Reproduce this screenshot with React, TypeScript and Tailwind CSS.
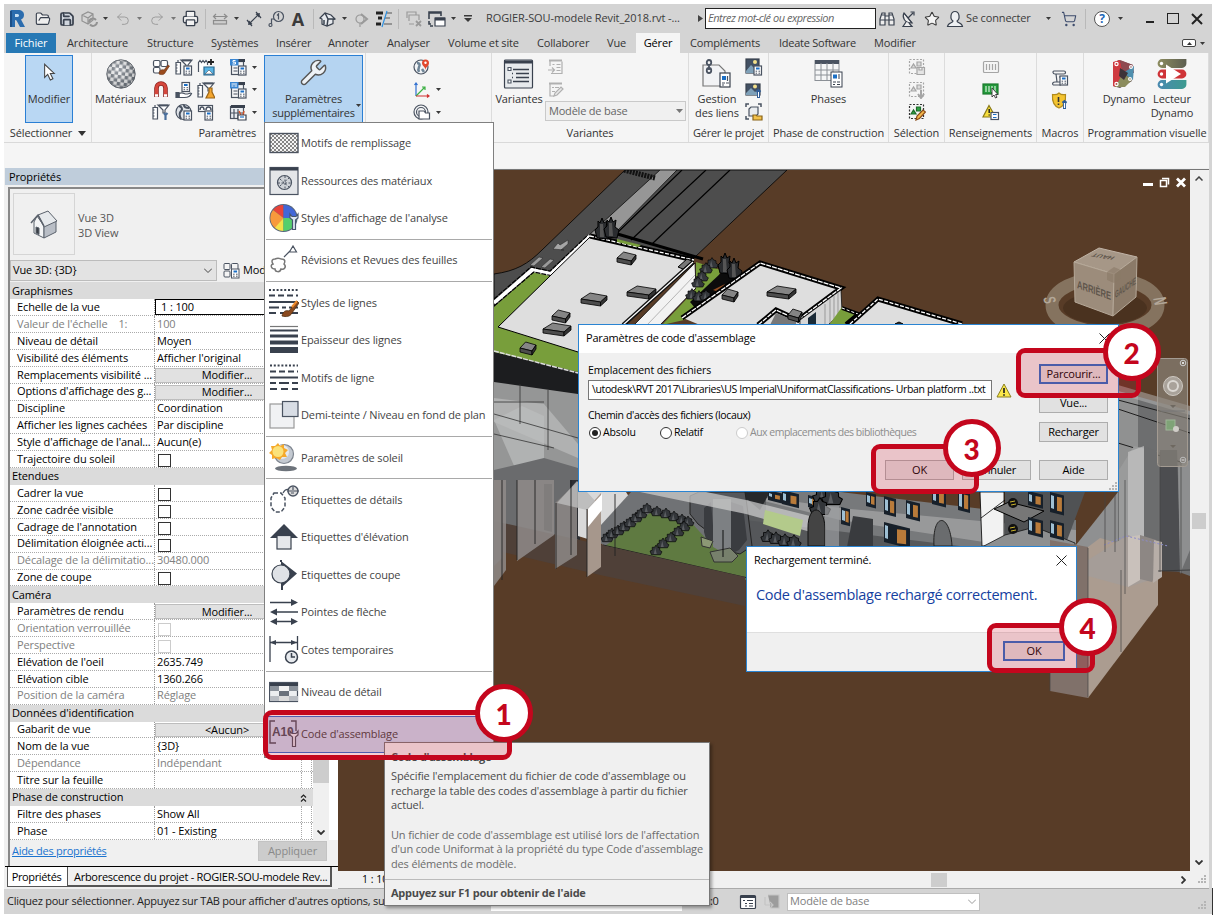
import React from "react";
import { Star, ShoppingCart, Undo2, Redo2, Printer, FolderOpen, Save, Wrench } from "lucide-react";

type Kids = { children?: React.ReactNode };

/* ---------- icons ---------- */
const D = "#4a5361";
const K = "#39414e";

function Svg({ s = 18, children, className = "" }: Kids & { s?: number; className?: string }) {
  return (
    <svg width={s} height={s} viewBox={`0 0 ${s} ${s}`} fill="none" stroke={D} strokeWidth="1.2" className={`shrink-0 ${className}`}>
      {children}
    </svg>
  );
}

const Caret = ({ dim = false }: { dim?: boolean }) => (
  <svg width="5" height="3" viewBox="0 0 5 3" className="shrink-0">
    <path d="M0 0h5L2.5 3z" fill={dim ? "#777" : "#3a3a3a"} />
  </svg>
);

const Calc = ({ x = 9, y = 8 }: { x?: number; y?: number }) => (
  <g>
    <rect x={x} y={y} width="7.5" height="9" fill="#fff" stroke={D} />
    <path d={`M${x + 2} ${y + 2.5}h3.6`} stroke="#1c6fc4" strokeWidth="2" />
    <path d={`M${x + 1.6} ${y + 5.2}h1.5m1.4 0h1.6m-4.5 2h1.5m1.4 0h1.6`} stroke={D} strokeWidth="1" />
  </g>
);
const Rule = () => (
  <g>
    <path d="M1 4.500h4.500v11.500H1z" fill="#fff" />
    <path d="M1 7h1.500m-1.500 3h1.500m-1.500 3h1.500M3 4.500V2" />
    <path d="M6 2h11l-4 5v3h-2V7z" fill="#fff" />
    <path d="M7 2.500h9" strokeWidth="1.800" />
  </g>
);
const Sheet = ({ t }: { t: string }) => (
  <g>
    <rect x="2.500" y="3.500" width="12" height="13" fill="#f4f5f7" />
    <path d="M9 2.500h7" strokeWidth="3" stroke={K} />
    <rect x="1" y="1" width="8.500" height="6.500" fill="#3a86d2" stroke="none" />
    <path d={t === "b" ? "M2.500 3h5.500M2.500 5h2m1 0h2.500" : "M6.500 2.500H4v1.700h2.500V6H3.500"} stroke="#fff" strokeWidth="1" />
    <path d="M4.500 10h4m-4 3h4" />
    <Calc x={9.500} y={8} />
  </g>
);

function Balls({ s = 30 }: { s?: number }) {
  return (
    <svg width={s} height={s} viewBox="0 0 30 30" className="shrink-0">
      <defs>
        <pattern id="chk" width="7" height="7" patternUnits="userSpaceOnUse" patternTransform="rotate(8)">
          <rect width="7" height="7" fill="#f4f5f6" />
          <path d="M0 0h3.5v3.5H0zM3.5 3.5H7V7H3.5z" fill="#6a727c" />
        </pattern>
        <radialGradient id="shade" cx=".4" cy=".35" r=".75">
          <stop offset="0" stopColor="#fff" stopOpacity=".3" />
          <stop offset="1" stopColor="#222" stopOpacity=".25" />
        </radialGradient>
      </defs>
      <circle cx="15" cy="15" r="14.2" fill="url(#chk)" stroke="#60666e" />
      <circle cx="15" cy="15" r="14.2" fill="url(#shade)" />
    </svg>
  );
}

function Small({ n }: { n: string }) {
  switch (n) {
    case "paint":
      return <Svg><rect x="1.500" y="2.500" width="6.500" height="6" rx="1.500" fill="#fff" /><rect x="9" y="2.500" width="6.500" height="6" rx="1.500" fill="#fff" /><rect x="1.500" y="9.500" width="6.500" height="5.500" rx="1.500" fill="#fff" /><path d="M7 16c0-4 3-5 5-4l4-5 1.500 1-4 6c-1 3-4 3-6.500 2z" fill="#9a4a1c" stroke="#6b3414" strokeWidth=".6" /></Svg>;
    case "magnet":
      return <Svg><path d="M4.500 16V7a4.500 4.500 0 0 1 9 0v9" stroke="#8d2420" strokeWidth="4.600" /><path d="M4.500 14V7a4.500 4.500 0 0 1 9 0v7" stroke="#d6473c" strokeWidth="3" /><path d="M3 14.500h3m6 0h3" stroke="#fff" strokeWidth="2.500" /></Svg>;
    case "rulewrench":
      return <Svg><Rule /><path d="M13.500 17V12l-1.500-2m1.500 2 2-2" stroke="#4a6f9c" strokeWidth="2.200" /></Svg>;
    case "rulecalc":
      return <Svg><Rule /><Calc /></Svg>;
    case "handcalc":
      return <Svg><Calc x={7} y={1.500} /><path d="M4 12.500c4-2 5 .5 7 .5 3 0 4-1.500 5.500-.5-1 2.500-4 4-7 4H4z" fill="#fff" /><path d="M1 11.500v5h3v-5z" fill={D} /></Svg>;
    case "globecalc":
      return <Svg><circle cx="8.500" cy="9" r="7.500" fill="#dfe3e8" /><path d="M4 3c3 1 4 3 2 5s-2 4 0 8M9 2c0 3 3 3 5 3" strokeWidth="2" /><Calc x={9} y={8} /></Svg>;
    case "rulehouse":
      return <Svg><path d="M1.500 14V4.500L3 2.500l1.500 2 1.500-2 1.500 2 1.500-2 1.500 2V7" fill="#fff" /><path d="M14 1v6M11 4h6" strokeWidth="1.800" stroke="#222" /><path d="M7 9h10v8H7z" fill="#59b4e4" stroke="#28688f" /><path d="m8 16 4-4 4 4z" fill="#fff" strokeWidth=".6" /></Svg>;
    case "ruleflask":
      return <Svg><Rule /><path d="M12 7h3v4l3 6H9l3-6z" fill="#f3a52e" stroke="#9a6416" /></Svg>;
    case "gaugecalc":
      return <Svg><rect x="1.500" y="2.500" width="14" height="6" fill="#fff" /><path d="M3 7c0-4 4-4 4 0M9 7c0-4 5-4 5 0" strokeWidth="1.500" /><Calc x={8} y={8} /></Svg>;
    case "sheetA":
      return <Svg><Sheet t="a" /></Svg>;
    case "sheetB":
      return <Svg><Sheet t="b" /></Svg>;
    case "sheetC":
      return <Svg><rect x="1.500" y="3.500" width="13" height="12" fill="#e9edf1" /><path d="M2 3.500h14" strokeWidth="3" stroke={K} /><path d="M5 6v9m4-9v9M2 10h12" /><path d="m10 8 2 4m3-4-1 4" stroke="#d0542c" strokeWidth="1.500" /><path d="M9 12h8v5H9z" fill="#fff" stroke={K} /><path d="M11 14h4" stroke="#1c6fc4" /></Svg>;
    case "globepin":
      return <Svg><circle cx="8" cy="9" r="7" fill="#f2f4f6" /><path d="M4 5c3 0 3 2 2 4s-1 3 0 5M9 11l2 3" strokeWidth="2.500" stroke="#6f8597" /><path d="M12.500 12c0-3-3.500-4-3.500-7a3.500 3.500 0 0 1 7 0c0 3-3.500 4-3.500 7z" fill="#e2482d" stroke="none" /><circle cx="12.500" cy="4.800" r="1.200" fill="#fff" stroke="none" /></Svg>;
    case "axes":
      return <Svg><path d="M3 15V2m-1.500 2L3 2l1.500 2" stroke="#2f6fd0" /><path d="m3 15 9-9m-3 0h3v3" stroke="#3cb043" /><path d="M3 15h13m-2-1.500 2 1.500-2 1.500" stroke="#d03030" /></Svg>;
    case "globehouse":
      return <Svg><circle cx="8" cy="9" r="7" fill="#f4f5f6" /><circle cx="8" cy="9" r="4.500" /><path d="M6 8h5l1.500 2h4v6H6z" fill="#fff" /></Svg>;
    case "listdim":
      return <Svg><g stroke="#b0b0b0"><path d="M2 2.500h13" strokeWidth="2" /><path d="M3 3v5m2.500-1.500h2m2 0h4m-4 3h4m-4 3h4M4 15.500h11v-12M1 12h6m-2-2.500L7.500 12 5 14.500" /></g></Svg>;
    case "editdim":
      return <Svg><g stroke="#b0b0b0"><path d="M2 2.500h13" strokeWidth="2" /><path d="M3 3v12h4M5 6.500h2m1 0h4M5 10.500h3" /><path d="m7 15 1-3 6-6 2 2-6 6z" fill="#e8e8e8" /></g></Svg>;
    case "piccalc":
      return <Svg><rect x="1" y="1" width="13" height="14" fill="#425063" stroke={K} /><path d="m1 13 5-6 4 4 4-3v7H1z" fill="#7ea0b8" stroke="none" /><circle cx="10" cy="4" r="2" fill="#f3e08a" stroke="none" /><Calc x={9} y={8} /></Svg>;
    case "picwrench":
      return <Svg><rect x="1" y="3" width="14" height="11" fill="#425063" stroke={K} /><path d="m1 12 5-5 4 4 4-3v6H1z" fill="#7ea0b8" stroke="none" /><circle cx="10" cy="5.500" r="2" fill="#f3e08a" stroke="none" /><path d="M13.500 17v-6L12 9m1.500 2L15 9" stroke="#2f5c96" strokeWidth="3" /><path d="M13.500 16v-5" stroke="#fff" strokeWidth="1" /></Svg>;
    case "box":
      return <Svg><path d="M1 4V1h3M13 1h3v3M1 13v3h3" strokeWidth="1.500" /><path d="m4 6 2-2h7v7l-2 2H4z" fill="#e9ecef" /><path d="M8 12h3l1 1h5v4H8z" fill="#f2c14a" stroke="#8a6418" /></Svg>;
    case "selsave":
    case "seldown":
      return <Svg><g stroke="#a5a5a5"><path d="M1.500 1.500h14v14h-14z" strokeDasharray="2 1.500" /><path d="m3 10 2.500-4L8 10zM9 4h4v4H9z" fill="#ddd" />{n === "selsave" ? <path d="M9 9.500h7.500v7H9zM11 9.500v2.500h3V9.500" fill="#e5e5e5" /> : <path d="M13 9v7m-3-3 3 4 3-4" strokeWidth="2" />}</g></Svg>;
    case "seledit":
      return <Svg><path d="M1.500 1.500h14v14h-14z" strokeDasharray="2 1.500" stroke="#333" /><path d="m3 11 2.500-4L8 11zM8.500 4h4v4h-4z" fill="#2fa043" stroke="#1d6b2b" /><path d="m8 17 1-4 6-6 2.500 2-6 6.500z" fill="#f2b64a" stroke="#8a4a18" /></Svg>;
    case "iddim":
      return <Svg><rect x="1.500" y="3.500" width="15" height="11" rx="1" stroke="#a5a5a5" /><path d="M4.500 6v6m3-6v6m3-6v6m3-6v6" stroke="#a5a5a5" /></Svg>;
    case "idsel":
      return <Svg><rect x="1" y="3" width="15" height="10" fill="#239a3b" stroke="#1b7a2e" /><path d="M4 5v6m3-6v6m3-6v6m3-6v6" stroke="#d6f2db" /><path d="M10 7v9l2-2 1.500 3 1.500-.8-1.400-2.700H16z" fill="#fff" stroke="#333" strokeWidth=".9" /></Svg>;
    case "warncalc":
      return <Svg><path d="M7 2.500 13.500 14H1z" fill="#f7de3c" stroke="#8a7a18" /><path d="M7.200 6v4m0 1.500v1" stroke="#222" strokeWidth="1.500" /><rect x="9" y="9.500" width="7.500" height="7" fill="#fff" /><path d="M11 11.500h3.500M11 14.500h3.500" stroke="#1c6fc4" /></Svg>;
    case "scrollcalc":
      return <Svg><path d="M3 2h10c2 0 2 3 0 3H4C1.500 5 1.500 2 3 2zM5 5l1 8M2 16c-1-1.500 0-3 2-3h5M2 16h8M8 8h3" fill="#f4f4f4" /><Calc x={9} y={7} /></Svg>;
    case "shieldwrench":
      return <Svg><path d="M8 1c2 2 4 2 6.500 1.500C15 9 13 14 8 16 3 14 1 9 1.500 2.500 4 3 6 3 8 1z" fill="#f4c430" stroke="#b08a1c" /><path d="M7.500 5v5m0 1.500V13" stroke="#333" strokeWidth="1.600" /><path d="M13.500 17v-6L12 9m1.500 2L15 9" stroke="#2f5c96" strokeWidth="3" /><path d="M13.500 16v-5" stroke="#fff" /></Svg>;
    case "cube":
      return <Svg><g stroke="#929292"><path d="m2 5 6-3 5 2v6l-5 4-6-3zM2 5l6 3 5-4M8 8v6" /><path d="M9 12a4 4 0 0 1 7-2m1 2a4 4 0 0 1-7 2.500" strokeWidth="2" /></g></Svg>;
    case "measure":
      return <Svg><path d="M3 6.500h13M5 4 2.500 6.500 5 9M13 4l3 2.500-3 2.500" stroke="#8c8c8c" /><rect x="2.500" y="10.500" width="13" height="3.500" stroke="#8c8c8c" fill="#ccc" /></Svg>;
    case "dim":
      return <Svg><path d="m4 14 10-10M2 10l5 6M11 2l5 6" stroke={K} /><path d="m3 15 1-4.500L7.500 14zM15 3l-4.500 1L14 7.500z" fill={K} stroke="none" /></Svg>;
    case "tag":
      return <Svg><circle cx="11.500" cy="6.500" r="5" /><path d="M10 5.500 11.500 4v5.500M7 9H4.500v5" /><circle cx="3.500" cy="15" r="1.500" /></Svg>;
    case "house":
      return <Svg><path d="m1 8 5-5 6 2 4 4-2 .5v4L8 16l-5-2V9z" fill="#e7eaee" stroke={K} /><path d="m6 3 3 6 7 0M9 9l-1 7M5 10v4" stroke={K} strokeWidth="1.500" /></Svg>;
    case "section":
      return <Svg><circle cx="8" cy="9" r="4" stroke="#9a9a9a" /><path d="m9 4 6 5-6 5" stroke="#9a9a9a" strokeWidth="2" /><path d="M8 13v4" stroke="#9a9a9a" /></Svg>;
    case "thin":
      return <Svg><path d="M1 3h7M3 8h4M1 14h5" strokeWidth="3" stroke="#222" /><path d="M11 3h6m-7 5h5m-6 6h8" stroke="#555" /><path d="M12 1 7 17" stroke="#2b8fe0" /></Svg>;
    case "closewin":
      return <Svg><g stroke="#9a9a9a"><path d="M2 8V2h9v3M4 11V5h10v5M9 14H4" /><path d="m11 11 5 5m0-5-5 5" strokeWidth="1.800" /></g></Svg>;
    case "switchwin":
      return <Svg><path d="M7 8h10v8H7z" fill="#fff" stroke={K} /><path d="M7 9h10" strokeWidth="3" stroke={K} /><path d="M1 9V2h12v4M1 3h12M3 14h-2v-3m4 5H2" stroke={K} strokeWidth="1.600" /></Svg>;
    case "bino":
      return <Svg><path d="M2 9 4 3h3v12H2zM11 3h3l2 6v6h-5zM7 6h4v4H7z" fill="#eee" stroke={K} /><path d="M2 10h5m4 0h5M4 5h3m4 0h3" stroke={K} /></Svg>;
    case "dish":
      return <Svg><path d="M4 3c-2 4 0 10 8 10z" fill="#eee" stroke={K} /><path d="m4 3 8 10M8 8l5-5m-2.500-1H14v3.500" stroke={K} /><path d="m6 12-3 4.500h9L9 13" stroke={K} fill="#eee" /></Svg>;
    case "user":
      return <Svg><path d="M9 1.500c5 0 5 8 2 9.500 0 2 5 1.500 5.500 5.500h-15C2 12.500 7 13 7 11 4 9.500 4 1.500 9 1.500z" fill="#eef0f2" stroke={K} /></Svg>;
    case "statuslist":
      return <Svg><rect x="1.500" y="2.500" width="15" height="13" rx="1" fill="#fff" stroke={K} /><path d="M1.500 4h15" stroke={K} strokeWidth="2" /><path d="M4 7.500h2m2 0h6M6 10.500h2m2 0h4M6 13h2m2 0h4" stroke={K} /></Svg>;
    case "statusoff":
      return <Svg><path d="M6 2h11v13H9M3 4v8m0 0h8M8 9l3 3-3 3" stroke="#c4c4c4" fill="#9c9c9c" /></Svg>;
    default:
      return null;
  }
}

const DocStack = () => (
  <svg width="32" height="32" viewBox="0 0 32 32" fill="none" stroke={D} strokeWidth="1.200">
    <path d="M2 7h16l6 6v15H2z" fill="#f2f3f5" stroke="#777" />
    <path d="M8 2c3 0 3 5 0 5s-3-5 0-5zm0 4v6m0-2c3 0 3 5 0 5s-3-5 0-5z" strokeWidth="1.800" />
    <rect x="19" y="15" width="10" height="14" fill="#fff" stroke={K} />
    <path d="M21 18h4v4h-4z" fill="#1c6fc4" stroke="none" />
    <path d="M26.500 18v5M21 25h3m1 0h3m-7 2h2" />
  </svg>
);
const VariantIcon = () => (
  <svg width="32" height="32" viewBox="0 0 32 32" fill="none" stroke={D}>
    <rect x="1.500" y="2" width="28" height="28" rx="1" fill="#e7eaed" stroke={K} strokeWidth="1.200" />
    <path d="M2 4h27" stroke={K} strokeWidth="3" />
    <path d="M5 9.500h3v3H5zM5 22h3v3H5z" strokeWidth="1.100" fill="#fff" />
    <path d="M10 11.500h16M9 15.500h1m3 0h13m-17 4h1m3 0h13m-16 4h16" stroke={K} strokeWidth="1.300" />
  </svg>
);
const PhaseIcon = () => (
  <svg width="32" height="32" viewBox="0 0 32 32" fill="none" stroke="#8b9096">
    <rect x="2" y="2.500" width="24" height="20" fill="#f5f6f7" />
    <path d="M2 4h24" stroke={D} strokeWidth="4" />
    <path d="M8 5v17m6-17v17m6-17v17M2 12h24M2 17h24" />
    <rect x="18" y="14" width="11" height="15" fill="#fff" stroke={K} />
    <path d="M20 16.500h4v4h-4z" fill="#1c6fc4" stroke="none" />
    <path d="M26 16v5M20 24h3m1 0h3m-7 2.500h2m2 0h3" stroke={K} />
  </svg>
);
const DynamoIcon = () => (
  <svg width="30" height="30" viewBox="0 0 30 30">
    <path d="M4 4 10 1l14 5-1 16-12 7-7-2z" fill="#5d4a52" />
    <path d="M4 3 11 1l3 13-7 14-3-1z" fill="#cf3a40" />
    <path d="m11 1 13 5 1 8-11 0z" fill="#8f4a50" />
    <path d="m25 7-1 14-10-7z" fill="#4f8fae" />
    <path d="m6 28 8-14 9 7-7 7z" fill="#8b8c5c" />
    <path d="m11 9 8 5-4 7-5-4z" fill="#3d3338" />
    <g fill="none" stroke="#fff" strokeWidth="1.200"><circle cx="7.500" cy="5" r="1.600" /><circle cx="22" cy="8" r="1.400" /><circle cx="7.500" cy="25" r="1.600" /><circle cx="21" cy="20" r="1.400" /></g>
  </svg>
);
const PlayerIcon = () => (
  <svg width="32" height="32" viewBox="0 0 32 32" strokeWidth="8.800" strokeLinecap="round">
    <defs>
      <linearGradient id="pa" gradientUnits="userSpaceOnUse" x1="2" x2="30" y1="0" y2="0"><stop stopColor="#8c8c60" /><stop offset="1" stopColor="#5e5f50" /></linearGradient>
      <linearGradient id="pb" gradientUnits="userSpaceOnUse" x1="2" x2="30" y1="0" y2="0"><stop stopColor="#4a8ab0" /><stop offset="1" stopColor="#3d9a90" /></linearGradient>
    </defs>
    <path d="M6 5.500h20v.01" stroke="url(#pa)" /><path d="M6 16h20" stroke="#cf3438" /><path d="M6 26.500h20v.01" stroke="url(#pb)" />
    <path d="m10 6.500 15 9.500-15 9.500z" fill="#fff" />
    <g fill="#fff"><circle cx="5.500" cy="5.500" r="1.700" /><circle cx="5.500" cy="16" r="1.700" /><circle cx="5.500" cy="26.500" r="1.700" /></g>
  </svg>
);

/* ---------- title bar ---------- */
function Slot({ c, children }: Kids & { c: string }) {
  return <div className={`flex h-full shrink-0 items-center justify-center ${c}`}>{children}</div>;
}
const VSep = () => <div className="h-5 w-px bg-[#b9b9b9]" />;

function TitleBar() {
  return (
    <div className="flex h-[29px] items-center bg-[#d4d4d4] text-[11px] text-[#3b3b3b]">
      <Slot c="w-[26px]"><svg width="16" height="17" viewBox="0 0 16 17"><path d="M2 0h7c4 0 6 2 6 5s-2 4-3 4.500L16 17h-5L7.500 10.500 6 10V17H1V1z" fill="#2b6cae" /><path d="M6 4h2.500c2 0 2 3 0 3H6z" fill="#c8dff2" /><path d="M1 1h2v16H1z" fill="#1d4f87" /></svg></Slot>
      <Slot c="w-[25px]"><FolderOpen size={16} strokeWidth={1.7} color={K} fill="#eee" /></Slot>
      <Slot c="w-[23px]"><Save size={16} strokeWidth={2.600} color={K} fill="#d0d6de" /></Slot>
      <Slot c="w-[22px]"><Small n="cube" /></Slot>
      <Slot c="w-[11px]"><Caret /></Slot>
      <Slot c="w-[23px]"><Undo2 size={16} strokeWidth={1.4} color="#999" /></Slot>
      <Slot c="w-[11px]"><Caret dim /></Slot>
      <Slot c="w-[23px]"><Redo2 size={16} strokeWidth={1.4} color="#999" /></Slot>
      <Slot c="w-[11px]"><Caret dim /></Slot>
      <Slot c="w-[22px]"><Printer size={17} strokeWidth={1.8} color={K} fill="#f2f2f2" /></Slot>
      <Slot c="w-[8px]"><VSep /></Slot>
      <Slot c="w-[21px]"><Small n="measure" /></Slot>
      <Slot c="w-[12px]"><Caret /></Slot>
      <Slot c="w-[23px]"><Small n="dim" /></Slot>
      <Slot c="w-[22px]"><Small n="tag" /></Slot>
      <Slot c="w-[22px]"><span className="text-[18px] leading-none font-bold">A</span></Slot>
      <Slot c="w-[8px]"><VSep /></Slot>
      <Slot c="w-[22px]"><Small n="house" /></Slot>
      <Slot c="w-[11px]"><Caret /></Slot>
      <Slot c="w-[22px]"><Small n="section" /></Slot>
      <Slot c="w-[23px]"><Small n="thin" /></Slot>
      <Slot c="w-[7px]"><VSep /></Slot>
      <Slot c="w-[23px]"><Small n="closewin" /></Slot>
      <Slot c="w-[24px]"><Small n="switchwin" /></Slot>
      <Slot c="w-[9px]"><Caret /></Slot>
      <Slot c="w-[20px]"><svg width="8" height="7" viewBox="0 0 8 7"><path d="M0 0h8v1.500H0zM0 3h8L4 7z" fill="#3a3a3a" /></svg></Slot>
      <div className="ml-[8px] w-[209px] shrink-0 pb-px text-[11px] tracking-[-0.1px]">ROGIER-SOU-modele Revit_2018.rvt -...</div>
      <Slot c="w-[10px]"><svg width="5" height="7" viewBox="0 0 5 7"><path d="M0 0v7l5-3.500z" fill="#444" /></svg></Slot>
      <div className="flex h-[21px] w-[171px] shrink-0 items-center border border-[#222] bg-white pl-[2px] text-[11px] tracking-[-0.48px] text-[#666] italic">Entrez mot-clé ou expression</div>
      <Slot c="w-[22px]"><Small n="bino" /></Slot>
      <Slot c="w-[22px]"><Small n="dish" /></Slot>
      <Slot c="w-[23px]"><Star size={16} strokeWidth={1.6} fill="#f4f4f4" /></Slot>
      <Slot c="w-[23px]"><Small n="user" /></Slot>
      <div className="w-[76px] shrink-0 tracking-[-0.15px]">Se connecter</div>
      <Slot c="w-[13px]"><Caret /></Slot>
      <Slot c="w-[28px]"><ShoppingCart size={16} strokeWidth={1.6} color="#3b4a6b" /></Slot>
      <Slot c="w-[4px]"><VSep /></Slot>
      <Slot c="w-[30px]"><span className="flex size-4 items-center justify-center rounded-full border border-[#555] bg-white text-[12px] leading-none font-bold text-[#1f68b8]">?</span></Slot>
      <Slot c="w-[6px]"><Caret /></Slot>
      <Slot c="w-[56px]"><span className="mt-[7px] mr-[3px] h-[2px] w-[8px] bg-[#222]" /></Slot>
      <Slot c="w-[1px]"><span className="mr-[14px] h-[11px] w-[12px] shrink-0 border-[1.5px] border-[#222]" /></Slot>
      <Slot c="w-[33px]"><svg width="12" height="12" viewBox="0 0 12 12"><path d="m1 1 10 10M11 1 1 11" stroke="#222" strokeWidth="2" /></svg></Slot>
    </div>
  );
}

function Tabs() {
  const tabs: [string, string][] = [
    ["Architecture", "w-[80px]"], ["Structure", "w-[64px]"], ["Systèmes", "w-[65px]"], ["Insérer", "w-[52px]"],
    ["Annoter", "w-[59px]"], ["Analyser", "w-[61px]"], ["Volume et site", "w-[89px]"], ["Collaborer", "w-[70px]"], ["Vue", "w-[29px]"],
  ];
  return (
    <div className="flex h-[20px] items-center bg-[#d4d4d4] text-[11px] tracking-[-0.15px] text-[#333]">
      <div className="ml-[2px] flex h-full w-[50px] shrink-0 items-center justify-center bg-[#2779b5] text-white">Fichier</div>
      <div className="w-[11px] shrink-0" />
      {tabs.map(([t, w]) => <span key={t} className={`${w} shrink-0 whitespace-nowrap`}>{t}</span>)}
      <div className="flex h-full w-[44px] shrink-0 items-center justify-center bg-[#f5f5f5] font-medium text-black">Gérer</div>
      <span className="ml-[10px] w-[89px] shrink-0">Compléments</span>
      <span className="w-[95px] shrink-0 tracking-[-0.25px]">Ideate Software</span>
      <span className="w-[308px] shrink-0">Modifier</span>
      <span className="flex h-[8px] w-[14px] items-center justify-center rounded-[2px] border border-[#444] bg-white"><svg width="5" height="3" viewBox="0 0 5 3"><path d="M0 3h5L2.500 0z" fill="#333" /></svg></span>
      <span className="ml-[4px]"><Caret /></span>
    </div>
  );
}

/* ---------- ribbon ---------- */
function Group({ w, label, children }: Kids & { w: string; label?: React.ReactNode }) {
  return (
    <div className={`flex h-[89px] shrink-0 flex-col border-r border-[#dcdcdc] ${w}`}>
      <div className="flex h-[71px] shrink-0">{children}</div>
      <div className="flex h-[18px] shrink-0 items-center justify-center text-[11px] tracking-[-0.13px] whitespace-nowrap">{label}</div>
    </div>
  );
}
function Big({ w, icon, children, c = "" }: Kids & { w: string; icon: React.ReactNode; c?: string }) {
  return (
    <div className={`flex shrink-0 flex-col items-center pt-[4px] text-center leading-[14px] ${w} ${c}`}>
      <div className="flex h-[34px] items-center">{icon}</div>
      <div className="pt-[0.500px] whitespace-nowrap">{children}</div>
    </div>
  );
}
function Col({ w, names, carets }: { w: string; names: string[]; carets?: boolean[] }) {
  return (
    <div className={`flex shrink-0 flex-col items-center pt-[3px] ${w}`}>
      {names.map((n, i) => (
        <div key={n} className="flex h-[22.6px] items-center gap-[5px]">
          <Small n={n} />
          {carets ? (carets[i] ? <Caret /> : <span className="w-[5px]" />) : null}
        </div>
      ))}
    </div>
  );
}

function Ribbon() {
  return (
    <div className="h-[115px] bg-[#f5f5f5] text-[11px] tracking-[-0.1px] text-[#333]">
      <div className="flex h-[90px] border-b border-[#d9d9d9] pl-px">
        <Group w="w-[87px]" label={<span className="flex items-center gap-[6px]">Sélectionner <svg width="8" height="5" viewBox="0 0 8 5"><path d="M0 0h8L4 5z" fill="#333" /></svg></span>}>
          <div className="mt-[2px] ml-[20px] flex h-[68px] w-[48px] shrink-0 flex-col items-center border border-[#2a7fd4] bg-[#b9d7f3] text-[11px]">
            <svg width="14" height="22" viewBox="0 0 16 24" className="mt-[6px]"><path d="M3 2v15l3.500-3.500L9.500 20l3-1.500-3-6H14z" fill="#fff" stroke="#444" strokeWidth="1.200" /></svg>
            <span className="mt-[7px]">Modifier</span>
          </div>
        </Group>
        <div className="flex h-[89px] w-[400px] shrink-0 border-r border-[#dcdcdc]">
          <div className="w-[172px] shrink-0">
            <div className="flex h-[71px]">
              <Big w="w-[57px]" icon={<Balls />}>Matériaux</Big>
              <Col w="w-[23px]" names={["paint", "magnet", "rulewrench"]} />
              <Col w="w-[23px]" names={["rulecalc", "handcalc", "globecalc"]} />
              <Col w="w-[22px]" names={["rulehouse", "ruleflask", "gaugecalc"]} />
              <div className="mt-[4px] ml-[5px] h-[64px] w-px bg-[#dcdcdc]" />
              <Col w="w-[42px]" names={["sheetA", "sheetB", "sheetC"]} carets={[true, true, true]} />
            </div>
            <div className="flex h-[18px] items-center justify-end pr-[8px] tracking-[-0.2px]">Paramètres</div>
          </div>
          <div className="mt-[2px] flex h-[68px] w-[99px] shrink-0 flex-col items-center border border-[#2a7fd4] bg-[#b5d4f1] leading-[14px]">
            <Wrench size={29} strokeWidth={1.200} color="#555" fill="#eef2f6" className="mt-[2px] shrink-0" />
            <span className="mt-[5px] tracking-[-0.25px]">Paramètres</span>
            <span className="relative tracking-[-0.25px]">supplémentaires<span className="absolute top-[-2px] -right-[6px] flex"><Caret /></span></span>
          </div>
          <div className="w-[3px] border-r border-[#dcdcdc]" />
          <div className="pl-[2px]"><Col w="w-[117px]" names={["globepin", "axes", "globehouse"]} carets={[false, true, true]} /></div>
        </div>
        <Group w="w-[197px]" label="Variantes">
          <Big w="w-[54px]" icon={<VariantIcon />}>Variantes</Big>
          <div className="flex flex-col pt-[3px]">
            <div className="flex h-[22.500px] items-center pl-[1px]"><Small n="listdim" /></div>
            <div className="flex h-[22.500px] items-center pl-[1px]"><Small n="editdim" /></div>
            <div className="-ml-px flex h-[20px] w-[141px] items-center justify-between border border-[#c9c9c9] bg-[#f0f0f0] pr-[2px] pl-[3px] tracking-[-0.2px] text-[#666]">Modèle de base<svg width="7" height="4" viewBox="0 0 7 4"><path d="M0 0h7L3.500 4z" fill="#777" /></svg></div>
          </div>
        </Group>
        <Group w="w-[80px]" label={<span className="tracking-[-0.25px]">Gérer le projet</span>}>
          <Big w="w-[56px]" icon={<DocStack />}>Gestion<br />des liens</Big>
          <Col w="w-[17px]" names={["piccalc", "picwrench", "box"]} />
        </Group>
        <Group w="w-[120px]" label="Phase de construction"><Big w="w-[119px]" icon={<PhaseIcon />}>Phases</Big></Group>
        <Group w="w-[56px]" label="Sélection"><Col w="w-[55px]" names={["selsave", "seldown", "seledit"]} /></Group>
        <Group w="w-[92px]" label="Renseignements"><Col w="w-[91px]" names={["iddim", "idsel", "warncalc"]} /></Group>
        <Group w="w-[47px]" label="Macros"><div className="pt-[11px]"><Col w="w-[46px]" names={["scrollcalc", "shieldwrench"]} /></div></Group>
        <Group w="w-[125px]" label={<span className="ml-[2px]">Programmation visuelle</span>}>
          <Big w="w-[80px]" icon={<DynamoIcon />}>Dynamo</Big>
          <Big w="w-[16px]" icon={<PlayerIcon />} c="items-center"><span className="-mx-4 block">Lecteur<br />Dynamo</span></Big>
        </Group>
      </div>
    </div>
  );
}

/* ---------- properties palette ---------- */
type Row = { k: string; v?: string; t?: "h" | "btn" | "chk" | "edit"; off?: boolean };
const rows: Row[] = [
  { k: "Graphismes", t: "h" }, { k: "Echelle de la vue", v: "1 : 100", t: "edit" }, { k: "Valeur de l'échelle\u00a0\u00a0\u00a0 1:", v: "100", off: true },
  { k: "Niveau de détail", v: "Moyen" }, { k: "Visibilité des éléments", v: "Afficher l'original" },
  { k: "Remplacements visibilité ...", v: "Modifier...", t: "btn" }, { k: "Options d'affichage des g...", v: "Modifier...", t: "btn" },
  { k: "Discipline", v: "Coordination" }, { k: "Afficher les lignes cachées", v: "Par discipline" }, { k: "Style d'affichage de l'anal...", v: "Aucun(e)" },
  { k: "Trajectoire du soleil", t: "chk" }, { k: "Etendues", t: "h" }, { k: "Cadrer la vue", t: "chk" }, { k: "Zone cadrée visible", t: "chk" },
  { k: "Cadrage de l'annotation", t: "chk" }, { k: "Délimitation éloignée acti...", t: "chk" }, { k: "Décalage de la délimitatio...", v: "30480.000", off: true },
  { k: "Zone de coupe", t: "chk" }, { k: "Caméra", t: "h" }, { k: "Paramètres de rendu", v: "Modifier...", t: "btn" },
  { k: "Orientation verrouillée", t: "chk", off: true }, { k: "Perspective", t: "chk", off: true }, { k: "Elévation de l'oeil", v: "2635.749" },
  { k: "Elévation cible", v: "1360.266" }, { k: "Position de la caméra", v: "Réglage", off: true }, { k: "Données d'identification", t: "h" },
  { k: "Gabarit de vue", v: "<Aucun>", t: "btn" }, { k: "Nom de la vue", v: "{3D}" }, { k: "Dépendance", v: "Indépendant", off: true },
  { k: "Titre sur la feuille", v: "" }, { k: "Phase de construction", t: "h" }, { k: "Filtre des phases", v: "Show All" }, { k: "Phase", v: "01 - Existing" },
];

function PropRow({ r }: { r: Row }) {
  if (r.t === "h")
    return (
      <div className="flex h-[16.900px] items-center justify-between bg-[#dbdbdb] pr-[6px] pl-[2px]">
        {r.k}
        <svg width="7" height="8" viewBox="0 0 7 8" fill="none" stroke="#222" strokeWidth="1.200"><path d="m1 3.500 2.500-2.500L6 3.500M1 7.500 3.500 5 6 7.500" /></svg>
      </div>
    );
  return (
    <div className={`flex h-[16.900px] items-stretch border-b border-dotted border-[#aaa] whitespace-nowrap ${r.off ? "text-[#808080]" : ""}`}>
      <div className="flex w-[145px] shrink-0 items-center overflow-hidden border-r border-dotted border-[#999] pl-[7px]">{r.k}</div>
      {r.t === "btn" ? (
        <div className="mt-px flex w-[146px] items-center justify-center border border-[#bdbdbd] bg-[#e1e1e1] pr-[2px] text-black">{r.v}</div>
      ) : r.t === "edit" ? (
        <div className="flex w-[146px] items-center border border-black pl-[5px]">{r.v}</div>
      ) : (
        <div className="flex w-[146px] items-center pl-[2px]">
          {r.t === "chk" ? <span className={`mt-[3px] ml-px size-[13px] border bg-white ${r.off ? "border-[#ccc]" : "border-[#333]"}`} /> : r.v}
        </div>
      )}
      <div className="w-[11px] border-x border-dotted border-[#aaa]" />
    </div>
  );
}

function Palette() {
  return (
    <div className="flex w-[334px] shrink-0 flex-col bg-[#f0f0f0] text-[11px] tracking-[-0.12px] text-black">
      <div className="ml-px h-[17px] bg-[#bfcddb] pl-[4px] leading-[17px]">Propriétés</div>
      <div className="mt-[2px] ml-[4px] flex h-[679px] flex-col border-t-2 border-l-2 border-[#888] bg-[#f0f0f0]">
        <div className="mt-[4px] ml-[3px] flex h-[62px] items-center">
          <div className="flex h-[62px] w-[62px] items-center justify-center border border-[#d5d5d5]">
            <svg width="28" height="29" viewBox="0 0 28 29" stroke="#5b626c" strokeLinejoin="round">
              <path d="M4 12v11l10 5V16L7 6z" fill="#f3f4f5" />
              <path d="m14 16 12-5v11l-12 6z" fill="#b9bec6" />
              <path d="M14 17 8 5 18 1l9 10z" fill="#e6e9ec" />
              <path d="m1 13 7-8 6 11" fill="none" strokeWidth="1.500" />
              <path d="M6 17v6l3 1.500V18z" fill="#3a3f46" />
            </svg>
          </div>
          <div className="pt-[2px] pl-[3px] leading-[15px] text-[#555]">Vue 3D<br />3D View</div>
        </div>
        <div className="mt-[4px] flex h-[23.400px] shrink-0 items-center">
          <div className="flex h-[21px] w-[207px] items-center justify-between border border-[#bcbcbc] bg-[#e3e3e3] pr-[4px] pl-[2px]">Vue 3D: {"{3D}"}
            <svg width="8" height="5" viewBox="0 0 8 5"><path d="m0 .5 4 4 4-4" fill="none" stroke="#444" /></svg></div>
          <svg width="17" height="17" viewBox="0 0 17 17" className="ml-[6px]" fill="#f4f4f4" stroke={D}><rect x="1" y="1.500" width="6" height="6" rx="1" /><rect x="8.500" y="1.500" width="6.500" height="6" rx="1" /><rect x="1" y="9" width="6" height="6" rx="1" /><Calc x={8.500} y={7} /></svg>
          <span className="ml-[3px]">Modifier le type</span>
        </div>
        <div className="flex h-[557.500px] shrink-0 bg-white">
          <div className="w-[303px]">{rows.map((r, i) => <PropRow key={i} r={r} />)}</div>
          <div className="flex w-[16px] flex-col items-center justify-end bg-[#f0f0f0] pb-[5px]">
            <div className="mb-[47px] h-[130px] w-full bg-[#cdcdcd]" />
            <svg width="8" height="5" viewBox="0 0 8 5"><path d="m.5.5 3.500 3.500L7.500.5" fill="none" stroke="#333" strokeWidth="1.800" /></svg>
          </div>
        </div>
        <div className="flex h-[23px] items-center pl-[2px]">
          <span className="w-[246px] tracking-[-0.28px] text-[#1a73cf] underline">Aide des propriétés</span>
          <div className="flex h-[20px] w-[69px] items-center justify-center border border-[#c3c3c3] bg-[#ccc] text-[#8a8a8a]">Appliquer</div>
        </div>
      </div>
      <div className="ml-px flex h-[22px] items-start border-t border-black">
        <div className="ml-[2px] flex h-[20px] w-[61px] items-center justify-center border border-t-0 border-[#555] bg-white pt-px pr-[2px] tracking-[-0.35px]">Propriétés</div>
        <div className="flex h-[20px] w-[264px] items-center overflow-hidden border-r-2 border-b-2 border-[#555] pt-[2px] pl-[6px] tracking-[-0.28px] whitespace-nowrap">Arborescence du projet - ROGIER-SOU-modele Rev...</div>
      </div>
    </div>
  );
}

/* ---------- 3D view ---------- */
const Bush = ({ x, y, s = 1 }: { x: number; y: number; s?: number }) => (
  <g transform={`translate(${x} ${y}) scale(${s})`}>
    <path d="m-6 5-2-5 3-1 0-4 3 0 2-3 2 3 3 1 0 3 3 2-2 4z" fill="#33363a" stroke="#000" strokeWidth=".8" />
    <path d="m-3 4 2-8 2 8z" fill="#5b5e62" />
  </g>
);
const Tree = ({ x, y }: { x: number; y: number }) => (
  <g transform={`translate(${x} ${y})`}>
    <path d="m-5 8-2-8 3-3 0-6 2 2 2-5 2 5 3-2-1 7 4 3-2 8z" fill="#2a2c2f" stroke="#000" />
    <path d="m-2 7 0-13 3 0 1 13z" fill="#555" />
  </g>
);
const Unit = ({ x, y, w = 16 }: { x: number; y: number; w?: number }) => (
  <g transform={`translate(${x} ${y})`} stroke="#000" strokeWidth=".8">
    <path d={`M0 6 ${w * 0.35} 0 ${w} 3 ${w * 0.75} 9z`} fill="#858585" />
    <path d={`M0 6 ${w * 0.75} 9v4L0 10z`} fill="#4d4d4d" />
    <path d={`M${w * 0.75} 9 ${w} 3v4l-${w * 0.25} 6z`} fill="#333" />
  </g>
);
const Win = ({ x, y, w = 12, h = 16 }: { x: number; y: number; w?: number; h?: number }) => (
  <g>
    <path d={`M${x} ${y}l${w} ${w * 0.25}v${h}l-${w}-${w * 0.25}z`} fill="#17202a" />
    <path d={`M${x + 1} ${y + 3}l3 1v${h - 7}l-3-1z`} fill="#9fc0d4" />
    <path d={`M${x + w * 0.5} ${y + w * 0.2 + 2}l${w * 0.35} 1v${h - 6}l-${w * 0.35}-1z`} fill="#b97b3a" />
  </g>
);

function Scene() {
  return (
    <svg width="852" height="701" viewBox="338 170 852 701" className="block shrink-0">
      <rect x="338" y="170" width="852" height="701" fill="#583c27" />
      {/* roads */}
      <path d="M625 170H787L695 257 560 330 494 330V274C516 271 528 264 542 250z" fill="#4d4d4d" stroke="#000" strokeWidth=".8" />
      <path d="M660 170h17L612 236 588 236z" fill="#969696" stroke="#000" strokeWidth=".7" />
      <path d="M624 170 655 178" stroke="#111" strokeWidth="5" strokeDasharray="2 1" />
      <path d="M682 170 616 234M706 170 631 240M730 170 652 244" stroke="#000" strokeWidth="1.200" />
      <path d="m553 249 5-6 2 2 8-5 0 4-7 6 3 0z" fill="#a5a5a5" stroke="#222" strokeWidth=".5" />
      <path d="m530 265 9-8 4 1-9 8zm11 2 9-8 4 1-9 8zm10 3 9-8 4 1-9 8z" fill="#9a9a9a" stroke="#222" strokeWidth=".5" />
      {/* first building */}
      <path d="M494 307 535 271 552 274 499 326 540 335 578 346V400H494z" fill="#789e3b" />
      <path d="M494 303 532 270 551 274 590 236" fill="none" stroke="#fff" strokeWidth="4" />
      <path d="M494 306 534 272 553 276 590 240M494 299 531 267 550 271 588 235" fill="none" stroke="#000" strokeWidth="1.200" strokeDasharray="5 1" />
      <path d="M590 237 694 261 610 340 578 352 498 327 550 276z" fill="#dedede" stroke="#000" />
      <path d="M590 236 694 260" stroke="#000" strokeWidth="5" />
      <path d="M590 236 694 260" stroke="#fff" strokeWidth="1.300" strokeDasharray="4 1.500" />
      <path d="M614 233 703 259" stroke="#000" strokeWidth="3" />
      <path d="m617 239 24 6-3 2-21-5z" fill="#789e3b" />
      <path d="M693 262 623 325" stroke="#111" strokeWidth="4" /><path d="M693 262 623 325" stroke="#fff" strokeWidth="1.200" />
      <path d="m695 263 1 25-36 37h-26z" fill="#f2f2f2" stroke="#000" strokeWidth=".8" />
      <path d="m695 275-48 50" stroke="#999" strokeWidth=".7" />
      <Unit x={617} y={252} w={19} /><Unit x={581} y={293} w={26} /><Unit x={627} y={286} w={29} /><Unit x={552} y={310} w={18} /><Unit x={543} y={323} w={28} /><Unit x={520} y={342} w={16} />
      <path d="m678 267 9-8 5 2-9 8z" fill="#777" stroke="#000" />
      {/* planting between buildings */}
      <path d="m696 262 25 8-12 30-25 20-22 5 34-36z" fill="#789e3b" />
      <path d="m722 272 28 6-50 36-10-12z" fill="#0c0c0c" />
      <path d="m713 290 12-6-6 8z" fill="#8f4d22" />
      {[[712, 264], [706, 269], [702, 277], [698, 283], [692, 295], [699, 297], [706, 296]].map(([x, y]) => <Bush key={`${x}${y}`} x={x} y={y} s={0.8} />)}
      <Tree x={602} y={230} /><Tree x={611} y={229} /><Tree x={725} y={265} /><Tree x={734} y={270} />
      {/* second building */}
      <path d="M760 262 842 288 798 325H700L683 318z" fill="#dedede" />
      <path d="M682 318 760 263 841 288 798 320 776 310 758 325" fill="none" stroke="#000" strokeWidth="5" />
      <path d="M682 318 760 263 841 288 798 320 776 310 758 325" fill="none" stroke="#fff" strokeWidth="1.300" strokeDasharray="5 1" />
      <path d="m841 290 1 22-14 13h-28v-5z" fill="#d6d6d6" stroke="#000" strokeWidth=".7" />
      <path d="m830 299v24m4-27v23m4-26v22m-13-11v20" stroke="#999" />
      <path d="m776 313 20 8v4h-26z" fill="#777" /><path d="m808 318 8-6v12h-8z" fill="#1a2a36" />
      <Unit x={722} y={289} w={16} /><Unit x={767} y={286} w={29} /><Unit x={788} y={309} w={14} />
      <path d="m842 307 17 7-16 11h-14z" fill="#789e3b" /><path d="m842 308 16 6-12 10" fill="none" stroke="#000" strokeWidth="4" /><path d="m842 308 16 6" stroke="#fff" strokeDasharray="3 2" />
      {/* third building */}
      <path d="M878 299 962 324H850z" fill="#dedede" />
      <path d="M850 324 878 299 962 324" fill="none" stroke="#000" strokeWidth="5" /><path d="M850 324 878 299 962 324" fill="none" stroke="#fff" strokeWidth="1.300" strokeDasharray="4 1.500" />
      <path d="m895 324 4-2 4 2z" fill="#555" stroke="#000" />
      {/* left facade and glass columns */}
      <path d="M494 352 578 372V480L494 500z" fill="#1c1d1f" />
      <path d="m494 351 84 22" stroke="#ddd" strokeWidth="1.500" strokeDasharray="5 1" />
      <path d="m494 382 84 12V556L494 530z" fill="#959696" />
      <path d="m494 398 50 6 34 40v14l-84-36z" fill="#b0b1b1" />
      <path d="m494 420 28-14 22 10v62l-22 6z" fill="#bcbdbd" opacity=".7" />
      <path d="M494 402h50m-50 12 84 24m-84-4 60 14M520 384v40m28-34v60" stroke="#333" strokeWidth=".8" />
      <path d="m494 470 50-12 34 10v75l-84-22z" fill="#6a6b6d" />
      <path d="M544 484h8v48l-8-2zM570 480h10v60l-10-2z" fill="#2d2f33" />
      <path d="m578 492 48 0 5 8-40 40-13-4z" fill="#d9d9d9" />
      <path d="m631 492 115 0V577L605 546 590 537z" fill="#707275" />
      {/* garden */}
      <path d="m605 546 45-33 38 6 22 24 36 6v31z" fill="#5f7a41" />
      <path d="m603 545 145 33" stroke="#222" />
      {[[607, 538], [612, 534], [618, 531], [624, 527], [630, 523], [636, 518], [641, 514], [647, 509], [657, 512], [666, 514], [674, 517], [682, 520], [688, 522], [684, 527], [678, 532], [671, 538], [663, 544], [656, 551]].map(([x, y]) => <Bush key={`${x}-${y}`} x={x} y={y} s={0.75} />)}
      {/* central facade */}
      <path d="M746 492h94l236 54v6H746z" fill="#56585a" />
      <path d="m746 520 330 40V520L840 492h-94z" fill="#77797b" />
      <path d="m752 498 88 22 236 36v-26L840 508l-70-10z" fill="#a6a7a8" opacity=".7" />
      <path d="m746 492h20l0 54h-20z" fill="#55575a" opacity=".8" />
      <path d="M700 492H770L760 510 748 500z" fill="#26282b" />
      <path d="m690 496 9-4 46 0 2 14 5 40-12 8-8-2-8-8-14-6-4-8-8-6-8-10z" fill="#55575b" stroke="#222" />
      <path d="m704 508 7-6 3 36-6 8-4-14zM731 502l12 4 4 34-8 10-8 4z" fill="#3a3c40" />
      <path d="M713 499h18v58l-18-10z" fill="#7d8083" />
      <path d="m612 492h28l106 22 72 20v-16L746 500l-40-8z" fill="#cfcfcf" opacity=".72" />
      <path d="m710 552 20-4 8 8-6 6-18 0z" fill="#77806c" stroke="#333" /><path d="M723 530v27" stroke="#111" />
      <path d="m701 537 12 4-3 7-8-2z" fill="#8c9875" stroke="#333" />
      <Win x={768} y={490} w={14} h={10} /><Win x={782} y={490} w={17} h={14} /><Win x={808} y={495} w={8} h={12} />
      <path d="M765 510 803 520 800 536 763 524z" fill="#b3ca8b" />
      {[[768, 537], [776, 539], [785, 541], [794, 542]].map(([x, y]) => <Bush key={x} x={x} y={y} s={0.9} />)}
      {[[823, 496], [832, 498], [820, 508]].map(([x, y]) => <Bush key={x} x={x} y={y} s={1.3} />)}
      <path d="m808 528c0-24 16-24 17 0v18h-17z" fill="#444" stroke="#111" />
      <path d="M825 506h14v40h-14z" fill="#9b9d9f" opacity=".7" />
      <Win x={841} y={507} w={9} h={17} /><Win x={866} y={492} w={10} h={14} /><Win x={884} y={496} w={12} h={18} /><Win x={906} y={500} w={14} h={18} /><Win x={932} y={488} w={14} h={16} /><Win x={958} y={490} w={12} h={20} />
      <Win x={884} y={522} w={26} h={20} /><path d="m853 516 20 3v28h-26z" fill="#393b3e" />
      <path d="M934 546c-2-34 16-34 18 0z" fill="#6a6c6e" stroke="#222" />
      <path d="m980 492 24 0v54h-22z" fill="#f2f2f2" stroke="#000" strokeWidth=".8" />
      <path d="m981 518 24-18" stroke="#000" strokeWidth=".8" />
      <path d="M1005 492h80l-20 54h-60z" fill="#505254" />
      <path d="m1005 535 30-8 40 16v4H982z" fill="#8d8f90" stroke="#111" strokeWidth=".8" />
      <path d="m994 509 15-7 35 9-20 11z" fill="#777" stroke="#000" />
      <Win x={1028} y={491} w={15} h={14} /><Win x={1050} y={492} w={14} h={20} /><Win x={1028} y={517} w={15} h={17} /><Win x={1050} y={520} w={14} h={17} />
      <g fill="#111"><circle cx="1013" cy="503" r="5" /><circle cx="1013" cy="529" r="5" /></g><path d="m1010 502 5-1m-4 4 5-1m-6 24 5-1m-4 4 5-1" stroke="#c9b32c" />
      {/* lower-left translucent glass */}
      <path d="M494 521 745 577V606L600 575 494 550z" fill="#4f4038" />
      <path d="M494 480h12v90l-12 16zM517 480h37v55l-37 26z" fill="#8f8b89" opacity=".85" />
      <path d="M494 480h8v78l-8 8zM555 503l22-20v72l-22 14z" fill="#8a8583" opacity=".9" />
      <path d="m587 509 14-16v74l-14 10z" fill="#a6978c" />
      <path d="m557 503 20-22 20 22-10 7z" fill="#b9b9b9" opacity=".85" />
      <path d="m588 509 14-15v16l-14 17z" fill="#fff" />
      <path d="M502 480v100M517 480v80M535 480v64M556 503v66M587 509v68M615 494v62M571 480v75" stroke="#222" strokeWidth=".9" />
      {/* right-hand towers */}
      <path d="m1118 391 72 20v165l-22-8-50-18z" fill="#6d6e6f" />
      <path d="m1118 391 20 5v92l-20 4z" fill="#a9a9a9" opacity=".6" />
      <path d="m1118 400 72 19m-72-10 72 24m-72 10 66 20" stroke="#111" strokeWidth=".9" fill="none" />
      <path d="m1118 394 72 21v-9l-72-21z" fill="#bbb" opacity=".5" />
      <path d="M1119 470 1134 446 1158 452V590L1142 587 1119 560z" fill="#9a9b9b" />
      <path d="M1076 545 1118 492V570L1088 580z" fill="#8f9091" />
      <path d="m1128 452 16-6v104l-16 4z" fill="#c2c2c2" opacity=".75" /><path d="M1144 446l14 6v130l-14-8z" fill="#6c6d6e" />
      <path d="M1160 450h17l4 122-21-1z" fill="#4c4d50" /><path d="m1178 466 12-6v90l-10 24z" fill="#8e8f90" />
      <path d="M1088 547 1100 538 1158 555V605L1088 698z" fill="#ab9c90" />
      <path d="M1088 560 1128 535 1160 548V577L1128 587 1088 576z" fill="#a59d98" />
      <path d="m1128 537v50l12-7v-45z" fill="#c9c1bb" /><path d="m1140 535 16 5v34l-4 8-12-3z" fill="#8d8784" /><path d="m1154 540 8 2v35l-9 6z" fill="#b7aea8" />
      <path d="M1050 540 1088 547V698L1050 691z" fill="#80716a" />
      <path d="m1104 545 22-9 42 10" stroke="#8b8bc9" strokeDasharray="2 2" fill="none" />
      <path d="M1088 548v149M1050 600v91M1105 492v60M1115 480v72M1125 480v114M1121 570v82M1160 452v120M1181 460v114" stroke="#444" strokeWidth=".7" />
      <path d="m1158 571 32-1" stroke="#333" strokeWidth=".8" />
      {/* view cube */}
      <ellipse cx="1105" cy="305" rx="53" ry="27" fill="none" stroke="#85735f" strokeWidth="13" />
      <ellipse cx="1105" cy="308" rx="42" ry="16" fill="#3c2818" opacity=".5" />
      <path d="m1074 262 25-14 38 9-23 17z" fill="#a69787" stroke="#c0b4a6" />
      <path d="m1074 262 40 12-1 42-38-14z" fill="#9c8c7b" stroke="#b5a898" />
      <path d="m1114 274 23-17-1 40-23 19z" fill="#8b7a68" stroke="#b5a898" />
      <path d="m1107 272 7-5 7 3 0 8-7 5-7-3z" fill="#8b7a68" opacity=".6" />
      <g fill="#5f564c" fontFamily="Liberation Sans, sans-serif" fontWeight="700" textAnchor="middle">
        <text transform="matrix(.69 .24 0 1 1094 294)" fontSize="11">ARRIÈRE</text>
        <text transform="matrix(.48 -.34 0 1 1125.500 291)" fontSize="10">GAUCHE</text>
        <text transform="matrix(-.85 -.15 .6 -.5 1105 255)" fontSize="9">HAUT</text>
      </g>
      <g fill="#b3a798" fontFamily="Liberation Sans, sans-serif" fontWeight="700" fontSize="14" textAnchor="middle">
        <text transform="matrix(.2 .7 -1.200 .2 1044 301)">S</text><text transform="matrix(.2 .75 -1.300 .2 1154 302)">N</text>
      </g>
      {/* navigation bar */}
      <rect x="1157.500" y="358.500" width="30" height="108" rx="3" fill="#8f8880" fillOpacity=".65" stroke="#a39b92" />
      <circle cx="1173" cy="386" r="9.500" fill="#a9a29a" stroke="#cfc9c2" /><circle cx="1173" cy="386" r="5" fill="none" stroke="#dcd8d3" strokeWidth="2" />
      <path d="M1161 411h24" stroke="#777" /><path d="m1170 405h6l-3 3zm0 40h6l-3 3z" fill="#6e6860" />
      <rect x="1166" y="420" width="9" height="10" fill="#7fa377" stroke="#9fb598" /><circle cx="1176" cy="429" r="3" fill="#d0cdc8" />
      <circle cx="1183" cy="363" r="2.800" fill="none" stroke="#ccc" /><circle cx="1183" cy="460" r="2.800" fill="none" stroke="#bbb" /><path d="m1182 362 2 2m0-2-2 2m-.500 96h3" stroke="#ddd" />
      {/* view window controls */}
      <path d="M1143 184.500h10" stroke="#fff" strokeWidth="3" />
      <path d="M1160.500 180.500h6v6h-6zM1162 178.500h6.500v6" fill="none" stroke="#fff" strokeWidth="1.500" />
      <path d="m1177 178.500 8 8m0-8-8 8" stroke="#fff" strokeWidth="2.800" />
    </svg>
  );
}

function Viewport() {
  return (
    <div className="flex min-w-0 flex-1 flex-col bg-[#f0f0f0]">
      <div className="h-[2px] shrink-0 border-b border-[#777] bg-[#f0f0f0]" />
      <div className="flex">
        <Scene />
        <div className="flex w-[17px] flex-col items-center justify-between bg-[#f0f0f0] py-[6px]">
          <svg width="8" height="5" viewBox="0 0 8 5"><path d="M.5 4.500 4 1l3.500 3.500" fill="none" stroke="#444" strokeWidth="1.500" /></svg>
          <div className="h-[16px] w-[14px] bg-[#cdcdcd]" />
          <svg width="8" height="5" viewBox="0 0 8 5"><path d="m.5.5 3.500 3.500L7.500.5" fill="none" stroke="#333" strokeWidth="1.800" /></svg>
        </div>
      </div>
      <div className="flex h-[18px] items-center border-b border-[#aaa] text-[10.500px] text-black">
        <span className="w-[593px] pl-[24px]">1 : 100</span>
        <div className="h-[14px] w-[16px] bg-[#cdcdcd]" />
        <svg width="5" height="8" viewBox="0 0 5 8" className="ml-[234px]"><path d="M.5.5 4 4 .5 7.500" fill="none" stroke="#333" strokeWidth="1.800" /></svg>
        <Grip c="ml-[12px]" />
      </div>
    </div>
  );
}
const Grip = ({ c = "" }: { c?: string }) => (
  <svg width="9" height="9" viewBox="0 0 9 9" className={c} fill="#b5b5b5"><path d="M6 0h2v2H6zM6 3h2v2H6zM6 6h2v2H6zM3 3h2v2H3zM3 6h2v2H3zM0 6h2v2H0z" /></svg>
);

function StatusBar() {
  return (
    <div className="flex h-[25px] items-center bg-[#d4d4d4] text-[11px] text-[#222]">
      <span className="w-[487px] shrink-0 pb-px pl-[3px] tracking-[-0.24px] whitespace-nowrap">Cliquez pour sélectionner. Appuyez sur TAB pour afficher d'autres options, su</span>
      <div className="h-[18px] w-[191px] shrink-0 bg-white" />
      <span className="w-[57px] shrink-0 pl-[28px] tracking-[-0.3px]">:0</span>
      <Small n="statuslist" />
      <span className="ml-[5px] w-[25px]"><Small n="statusoff" /></span>
      <div className="flex h-[18px] w-[193px] items-center justify-between border border-[#c0c0c0] bg-white pr-[3px] pl-[2px] tracking-[-0.15px] text-[#808080]">Modèle de base<svg width="8" height="5" viewBox="0 0 8 5"><path d="m0 .5 4 4 4-4" fill="none" stroke="#999" /></svg></div>
      <Grip c="mt-[8px] ml-[218px]" />
    </div>
  );
}

/* ---------- drop-down menu ---------- */
function MenuIcon({ n }: { n: number }) {
  const inner = [
    <g><defs><pattern id="hx" width="4" height="4" patternUnits="userSpaceOnUse"><path d="m0 0 4 4M4 0 0 4" stroke="#555" strokeWidth=".7" /></pattern></defs><rect x="1" y="5.500" width="28" height="19" fill="#f4f4f4" stroke={D} strokeWidth="1.400" /><rect x="1" y="5.500" width="28" height="19" fill="url(#hx)" stroke="none" /></g>,
    <g><rect x="1" y="1.500" width="28" height="27" fill="#e4e6e9" stroke={D} /><path d="M1 3h28" strokeWidth="3" stroke={K} /><circle cx="15.500" cy="16.500" r="7" fill="#cfd3d8" stroke={D} /><path d="m11 13 9 8m-9-1 9-8m-4-2v14m-7-7h14" strokeWidth="1" strokeDasharray="2 1.500" /></g>,
    <g stroke="none"><circle cx="14.500" cy="15" r="14" fill="#56657c" /><path d="M14.500 15 4 7A13 13 0 0 1 14.500 2z" fill="#e8443a" /><path d="M14.500 15V2A13 13 0 0 1 27.500 15z" fill="#4167d8" /><path d="M14.500 15 7 25.600A13 13 0 0 1 4 7z" fill="#f7993c" /><path d="M14.500 15v13A13 13 0 0 1 6 24.700z" fill="#f3e04a" /><path d="M14.500 15h13A13 13 0 0 1 14.500 28z" fill="#54cf6c" /><path d="M21 11v4l2.500 2v9.500h3V17l2.500-2v-4l-2 2.500h-4z" fill="#dde7f2" stroke="#45566e" /></g>,
    <g><path d="M6 14c4-2 5 0 6 0 5 0 4 3 3 5 3 3 0 6-3 5-1 4-6 3-6 0-4 0-5-4-2-5-2-3-1-5 2-5z" fill="#fff" stroke="#777" strokeWidth="1.500" /><path d="m15 12 6-6m0 0 3-5 3.500 6h-7z" /></g>,
    <g stroke={K}><path d="M0 2h29" strokeDasharray="2 1.800" strokeWidth="2" /><path d="M0 7.500h29" strokeDasharray="6 3" strokeWidth="2.200" /><path d="M0 14h29" strokeWidth="2" /><path d="M0 19.500h29" strokeDasharray="10 3 4 3" strokeWidth="2.200" /><path d="M0 25h29" strokeDasharray="7 4" strokeWidth="2.200" /><path d="M13 28c1-5 4-6 7-5l8-10 2 2-7 10c-2 4-6 4-10 3z" fill="#8b4a1f" stroke="#52300f" strokeWidth=".8" /><path d="m23 19 5-6" stroke="#ee8a2a" strokeWidth="2" /></g>,
    <g stroke={K}><path d="M1 1.500h28" strokeWidth="1.200" stroke="#777" /><path d="M1 5.500h28" strokeWidth="2" /><path d="M1 11h28" strokeWidth="3" /><path d="M1 17.500h28" strokeWidth="4" /><path d="M1 25h28" strokeWidth="6" /></g>,
    <g stroke={K}><path d="M1 2.500h28" strokeDasharray="2 1.800" strokeWidth="2" /><path d="M1 8.500h28" strokeDasharray="6 3" strokeWidth="2.200" /><path d="M1 14.500h28" strokeWidth="2" /><path d="M1 20h28" strokeDasharray="6 3 10 3" strokeWidth="2.200" /><path d="M1 26h28" strokeDasharray="7 4" strokeWidth="2.200" /></g>,
    <g><rect x="1" y="4" width="24" height="24" fill="#f1f2f4" stroke="#999" /><rect x="13.500" y="1.500" width="15.500" height="15" fill="#d8dde5" stroke={D} /></g>,
    <g stroke="none"><circle cx="15" cy="11" r="9.500" fill="#c3c9d1" stroke="#7d848e" /><circle cx="13" cy="9" r="7" fill="#e6e9ec" /><ellipse cx="17" cy="25.500" rx="11" ry="2.800" fill="#6d737b" /><path d="m9 0 2 3 4-2 0 4 4 2-3 3 2 4-5 0-2 3-4-2-4 1 0-4-3-2 3-3-1-4 4 0z" fill="#f5a92a" /><circle cx="9" cy="8.500" r="5.500" fill="#fbe27a" /></g>,
    <g><path d="M5 8h7l4 5v9l-4 5H6l-4-5v-9z" strokeDasharray="4 2" strokeWidth="1.500" /><path d="M14 8c2-4 5-4 7-3" /><circle cx="24" cy="6" r="5" fill="#ddd" strokeWidth="1.400" /><path d="M18 6h12M24 2v3m-2 3h3" /></g>,
    <g><path d="M15 2 29 16H1z" fill={K} stroke="none" /><rect x="8" y="13.500" width="14" height="13.500" fill="#e6e8eb" stroke={K} /></g>,
    <g><path d="M12 1 28 13.500 14 26l-1 5-1-5z" fill={K} stroke="none" /><path d="m12 2 0-2m1 24v6" stroke={K} strokeWidth="2" /><circle cx="12" cy="14" r="9" fill="#dfe2e6" stroke={K} /></g>,
    <g stroke={K} strokeWidth="1.500"><path d="M1 5.500h26M4 15h25M4 24.500h22" /><path d="m22 2 7 3.500L22 9zM8 11.500 1 15l7 3.500zM22 21l7 3.500-7 3.500zM8 21l-7 3.500L8 28z" fill={K} stroke="none" /></g>,
    <g stroke={K}><path d="M1 1v26M28.500 1v14M1 7.500h27" strokeWidth="1.300" /><path d="m7 5-6 2.500L7 10zM22 5l6 2.500-6 2.500z" fill={K} stroke="none" /><circle cx="22.500" cy="22" r="6" fill="#e7eaee" strokeWidth="1.500" /><path d="M22.500 18v4h3.500" strokeWidth="1.500" /></g>,
    <g stroke="none"><rect x=".5" y="5.500" width="28" height="19" fill="#eceef0" stroke={D} /><path d="M1 6h28v3H1z" fill={K} /><path d="M1 9h9v5H1zM20 9h9v5h-9z" fill="#8b929b" /><path d="M10 9h10v5H10z" fill="#f4f4f4" /><path d="M10 14h10v5H10z" fill="#6b727c" /><path d="M10 19h10v5H10z" fill="#dcdcdc" /><path d="M1 19h9v5H1zM20 19h9v5h-9z" fill="#b9bdc3" /></g>,
    <g><path d="M6 2H1v22h6M22 2h5v10" strokeWidth="1.400" /><text x="3" y="17" fontSize="12" fontWeight="700" fontFamily="Liberation Sans, sans-serif" fill={D} stroke="none">A10</text><path d="M21 12v4l2.500 2v9.500h3V18l2.500-2v-4l-2 2.500h-4z" fill="#e6edf5" stroke={D} /></g>,
  ][n];
  return <svg width="30" height="30" viewBox="0 0 30 30" fill="none" stroke={D} strokeWidth="1.200" className="shrink-0">{inner}</svg>;
}

const groups = [
  ["Motifs de remplissage", "Ressources des matériaux", "Styles d'affichage de l'analyse"],
  ["Révisions et Revues des feuilles"],
  ["Styles de lignes", "Epaisseur des lignes", "Motifs de ligne", "Demi-teinte / Niveau en fond de plan"],
  ["Paramètres de soleil"],
  ["Etiquettes de détails", "Etiquettes d'élévation", "Etiquettes de coupe", "Pointes de flèche", "Cotes temporaires"],
  ["Niveau de détail"],
  ["Code d'assemblage"],
];

function Menu() {
  let n = 0;
  return (
    <div className="absolute top-[122px] left-[264px] h-[636px] w-[230px] border border-[#808080] bg-white pt-[1.200px] text-[11px] tracking-[-0.13px] text-[#444]">
      {groups.map((g, gi) => (
        <React.Fragment key={gi}>
          {gi > 0 && <div className={`mx-[1px] flex h-[4.600px] items-center ${gi === 6 ? "invisible" : ""}`}><div className="h-px w-full bg-[#a9a9a9]" /></div>}
          {g.map((t) => {
            const i = n++;
            return (
              <div key={t} className={`flex h-[37.600px] items-center pl-[4px] whitespace-nowrap ${i === 15 ? "border-y border-[#2f6fd0] bg-[#c8daf0]" : ""}`}>
                <MenuIcon n={i} />
                <span className="ml-[2px] pt-[0.500px]">{t}</span>
              </div>
            );
          })}
        </React.Fragment>
      ))}
    </div>
  );
}

function Tooltip() {
  return (
    <div className="absolute top-[742px] left-[384px] h-[164px] w-[326px] border border-[#777] bg-[#f0f0f0] text-[11px] leading-[14.300px] tracking-[-0.12px] whitespace-nowrap text-[#4a4a4a] shadow-[2px_2px_3px_rgba(0,0,0,0.35)]">
      <div className="pt-[7px] pl-[6px] font-bold tracking-[-0.25px]">Code d'assemblage</div>
      <div className="pt-[5px] pl-[6px]">Spécifie l'emplacement du fichier de code d'assemblage ou<br />recharge la table des codes d'assemblage à partir du fichier<br />actuel.</div>
      <div className="pt-[16px] pl-[6px] tracking-[-0.15px] text-[#6c6c6c]">Un fichier de code d'assemblage est utilisé lors de l'affectation<br />d'un code Uniformat à la propriété du type Code d'assemblage<br />des éléments de modèle.</div>
      <div className="mt-[8px] border-t border-[#bbb] pt-[6px] pl-[6px] font-bold tracking-[-0.25px]">Appuyez sur F1 pour obtenir de l'aide</div>
    </div>
  );
}

/* ---------- dialogs ---------- */
const Btn = ({ children, c = "" }: Kids & { c?: string }) => (
  <div className={`flex h-[20px] w-[69px] shrink-0 items-center justify-center bg-[#e1e1e1] text-black ${c || "border border-[#adadad]"}`}>{children}</div>
);
const Cross = () => <svg width="11" height="11" viewBox="0 0 11 11"><path d="m.5.5 10 10m0-10-10 10" stroke="#222" /></svg>;
const Radio = ({ on, off }: { on?: boolean; off?: boolean }) => (
  <span className={`flex size-[12px] shrink-0 items-center justify-center rounded-full border bg-white ${off ? "border-[#ccc]" : "border-[#333]"}`}>{on && <span className="size-[6px] rounded-full bg-[#222]" />}</span>
);

function AssemblyDialog() {
  return (
    <div className="absolute top-[324px] left-[578px] flex h-[168px] w-[541px] flex-col border border-[#2a84d2] bg-[#f0f0f0] text-[11px] tracking-[-0.2px] text-black">
      <div className="flex h-[28px] shrink-0 items-center justify-between bg-white pr-[8px] pb-[2px] pl-[7px]">Paramètres de code d'assemblage<Cross /></div>
      <div className="flex flex-1">
        <div className="flex w-[460px] flex-col pl-[9px] text-[10.500px] tracking-[-0.1px]">
          <div className="mt-[10px] h-[17px] leading-[15px]">Emplacement des fichiers</div>
          <div className="flex items-center">
            <div className="flex h-[20px] w-[404px] shrink-0 items-center border border-[#777] bg-white pl-[3px] text-[10.500px] tracking-[-0.37px] whitespace-nowrap">\utodesk\RVT 2017\Libraries\US Imperial\UniformatClassifications- Urban platform ..txt</div>
            <svg width="16" height="15" viewBox="0 0 16 15" className="ml-[4px] shrink-0"><path d="M8 1 15 14H1z" fill="#fbe84a" stroke="#8b8020" strokeLinejoin="round" /><path d="M8 5v5m0 1.300v1.500" stroke="#222" strokeWidth="1.700" /></svg>
          </div>
          <div className="mt-[8px] h-[16px] leading-[15px] tracking-[-0.35px]">Chemin d'accès des fichiers (locaux)</div>
          <div className="mt-[2px] ml-px flex h-[14px] items-center">
            <Radio on /><span className="w-[59px] pl-[2px]">Absolu</span>
            <Radio /><span className="w-[64px] pl-[2px] tracking-[-0.3px]">Relatif</span>
            <Radio off /><span className="pl-[2px] tracking-[-0.5px] text-[#8d8d8d]">Aux emplacements des bibliothèques</span>
          </div>
        </div>
        <div className="flex flex-col pt-[11px]">
          <Btn c="border-2 border-[#2a6fc9]">Parcourir...</Btn>
          <Btn c="mt-[9px] border border-[#adadad]">Vue...</Btn>
          <Btn c="mt-[9px] border border-[#adadad]">Recharger</Btn>
        </div>
      </div>
      <div className="flex h-[31px] items-start justify-end gap-[8px] pr-[10px]"><Btn>OK</Btn><Btn>Annuler</Btn><Btn>Aide</Btn></div>
      <div className="absolute right-0 bottom-0"><Grip /></div>
    </div>
  );
}

function DoneDialog() {
  return (
    <div className="absolute top-[546px] left-[746px] flex h-[126px] w-[331px] flex-col border border-[#2a84d2] bg-white text-[11px] tracking-[-0.18px] text-black">
      <div className="flex h-[27px] shrink-0 items-center justify-between pr-[9px] pl-[7px]">Rechargement terminé.<Cross /></div>
      <div className="h-[58px] shrink-0 pt-[10px] pl-[9px] text-[14.500px] tracking-[-0.31px] text-[#163fa0]">Code d'assemblage rechargé correctement.</div>
      <div className="flex flex-1 items-start justify-end border-t border-[#dfdfdf] bg-[#f0f0f0] pt-[8px] pr-[11px]">
        <div className="flex h-[20px] w-[62px] items-center justify-center border-2 border-[#2a6fc9] bg-[#e1e1e1]">OK</div>
      </div>
    </div>
  );
}

function Callout({ n, box, dot }: { n: number; box: string; dot: string }) {
  return (
    <>
      <div className={`absolute rounded-[9px] border-[5px] border-[#c4061d] bg-[#d0142c]/20 ${box}`} />
      <div className={`absolute flex size-[58px] items-center justify-center rounded-full border-[5px] border-[#c4061d] bg-white pt-[2px] pr-px font-['Lato','Open_Sans',sans-serif] text-[28px] leading-none font-black text-[#c4061d] ${dot}`}>{n}</div>
    </>
  );
}

export default function App() {
  return (
    <div className="relative h-[919px] w-[1217px] overflow-hidden bg-white pt-1 pl-1 font-['Open_Sans','Noto_Sans',sans-serif]">
      <div className="flex h-[910px] w-[1208px] flex-col border-r-[3px] border-[#d4d4d4]">
        <TitleBar />
        <Tabs />
        <Ribbon />
        <div className="flex h-[721px] shrink-0">
          <Palette />
          <Viewport />
        </div>
        <StatusBar />
      </div>
      <div className="absolute top-[888px] left-[1212px] h-[27px] w-px bg-[#333]" />
      <Menu />
      <AssemblyDialog />
      <DoneDialog />
      <Tooltip />
      <Callout n={1} box="left-[263px] top-[710px] h-[50px] w-[249px]" dot="left-[475px] top-[684px]" />
      <Callout n={2} box="left-[1016px] top-[348px] h-[50px] w-[125px]" dot="left-[1103px] top-[323px]" />
      <Callout n={3} box="left-[871px] top-[444px] h-[50px] w-[108px]" dot="left-[943px] top-[419px]" />
      <Callout n={4} box="left-[987px] top-[623px] h-[50px] w-[108px]" dot="left-[1059px] top-[598px]" />
    </div>
  );
}
